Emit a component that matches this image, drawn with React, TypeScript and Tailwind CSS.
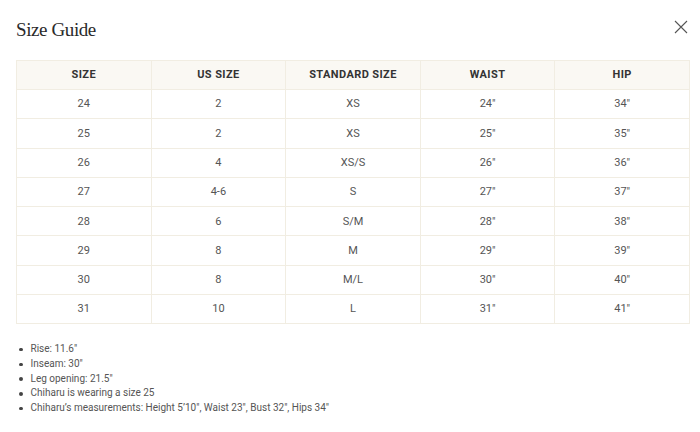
const rows = [
  ["24", "2", "XS", "24\u2033", "34\u2033"],
  ["25", "2", "XS", "25\u2033", "35\u2033"],
  ["26", "4", "XS/S", "26\u2033", "36\u2033"],
  ["27", "4-6", "S", "27\u2033", "37\u2033"],
  ["28", "6", "S/M", "28\u2033", "38\u2033"],
  ["29", "8", "M", "29\u2033", "39\u2033"],
  ["30", "8", "M/L", "30\u2033", "40\u2033"],
  ["31", "10", "L", "31\u2033", "41\u2033"],
]

const headers = ["SIZE", "US SIZE", "STANDARD SIZE", "WAIST", "HIP"]

const notes = [
  "Rise: 11.6\u2033",
  "Inseam: 30\u2033",
  "Leg opening: 21.5\u2033",
  "Chiharu is wearing a size 25",
  "Chiharu\u2019s measurements: Height 5\u201910\u2033, Waist 23\u2033, Bust 32\u2033, Hips 34\u2033",
]

export default function App() {
  return (
    <div className="w-[700px] h-[432px] bg-white px-4 pt-[17px] font-['Roboto',Arial,sans-serif] text-[#555]">
      <div className="flex items-center justify-between h-[26px]">
        <h2 className="text-[19px] text-[#2a2a2a] font-['Liberation_Serif','Times_New_Roman',serif] tracking-[-0.4px]">
          Size Guide
        </h2>
        <button className="mr-[-4px] mt-[-6px] text-[#555]">
          <svg width="14" height="14" viewBox="0 0 14 14" fill="none" stroke="currentColor" strokeWidth="1.1">
            <path d="M1 1L13 13M13 1L1 13" />
          </svg>
        </button>
      </div>

      <table className="mt-[17px] w-[674px] table-fixed border-collapse text-[11px]">
        <thead>
          <tr className="bg-[#faf8f3] h-[29px]">
            {headers.map((h) => (
              <th
                key={h}
                className="border border-[#f1ede2] font-bold text-[#333] tracking-[0.4px] text-center pt-px"
              >
                {h}
              </th>
            ))}
          </tr>
        </thead>
        <tbody>
          {rows.map((r, i) => (
            <tr key={i} className="h-[29.3px]">
              {r.map((c, j) => (
                <td key={j} className="border border-[#f1ede2] text-center text-[#555] pt-px">
                  {c}
                </td>
              ))}
            </tr>
          ))}
        </tbody>
      </table>

      <ul className="mt-[18px] text-[10px] leading-[14.7px] text-[#555]">
        {notes.map((n) => (
          <li key={n} className="flex items-center">
            <span className="ml-[3px] mr-[8px] w-[3.5px] h-[3.5px] rounded-full bg-[#444]" />
            {n}
          </li>
        ))}
      </ul>
    </div>
  )
}
